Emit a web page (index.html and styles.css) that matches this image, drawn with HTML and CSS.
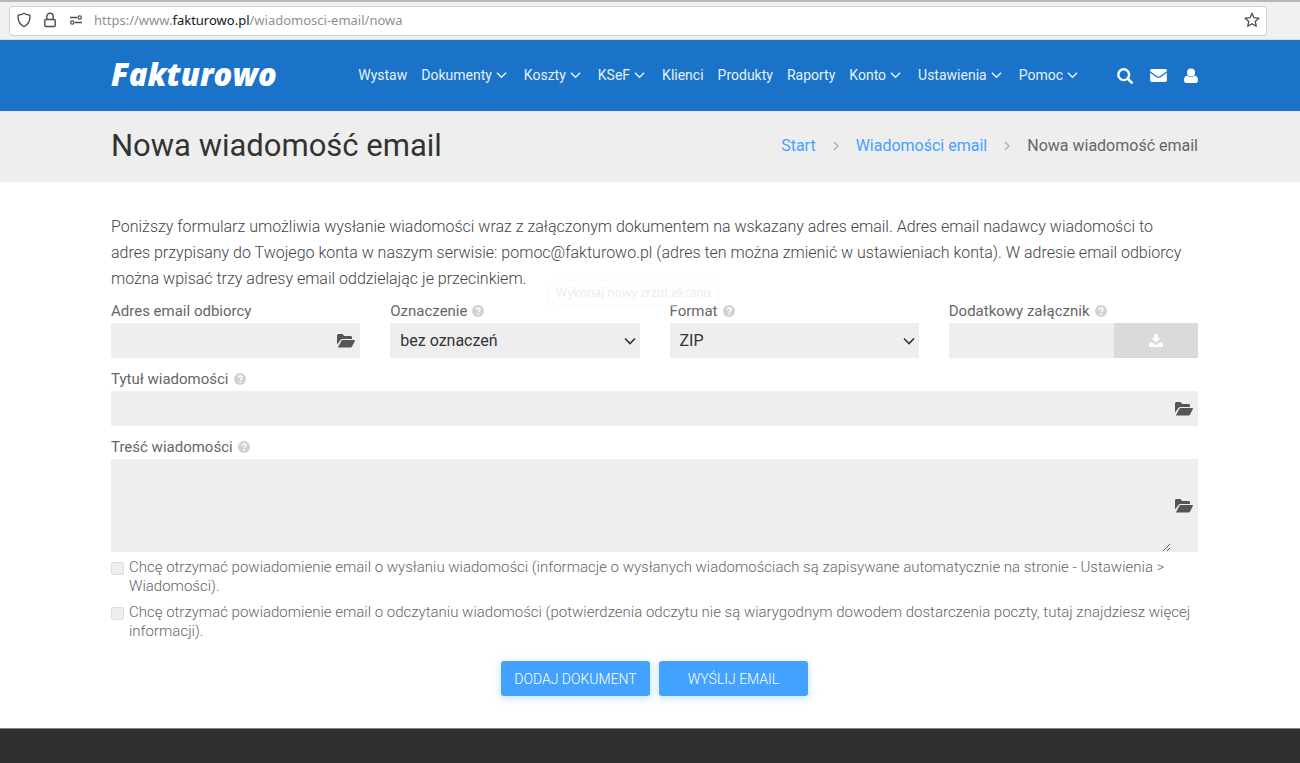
FILE: index.html
```html
<!DOCTYPE html>
<html lang="pl">
<head>
    <meta charset="UTF-8">
    <meta name="viewport" content="width=device-width, initial-scale=1.0">
    <title>Nowa wiadomość email - Fakturowo</title>
    <link rel="stylesheet" href="styles.css">
</head>
<body>
    <svg class="symbols" aria-hidden="true">
        <symbol id="chevron" viewBox="0 0 12 8"><path d="M1 1.5l5 5 5-5" fill="none" stroke="currentColor" stroke-width="1.6"/></symbol>
        <symbol id="next" viewBox="0 0 6 10"><path d="M1 1l4 4-4 4" fill="none" stroke="currentColor" stroke-width="1.2"/></symbol>
        <symbol id="folder" viewBox="0 0 18 14"><path d="M0 10.5V1.6C0 .7.7 0 1.600 0h3.900l1.800 2h6.200c.8 0 1.500.6 1.500 1.500V5H5.600c-1 0-1.800.4-2.300 1.200zM1 13.200l3.300-6.300c.3-.6.800-.9 1.400-.9h11.500c.6 0 1 .6.7 1.100l-3 5.700c-.3.500-.8.800-1.400.8H1.500c-.4 0-.6-.1-.5-.4z" fill="currentColor"/></symbol>
        <symbol id="help" viewBox="0 0 12 12"><circle cx="6" cy="6" r="6" fill="#d2d2d2"/><path d="M4.100 4.700c.1-1.100.9-1.700 2-1.700 1.100 0 1.900.6 1.900 1.600 0 1.300-1.700 1.300-1.700 2.600" fill="none" stroke="#fff" stroke-width="1.400"/><circle cx="6.200" cy="9" r=".9" fill="#fff"/></symbol>
    </svg>

    <div class="browser-bar">
        <div class="address">
            <svg width="16" height="16" viewBox="0 0 16 16"><path d="M8 1.200c1.800 1.200 3.800 1.800 6 2 .3 5-1.600 9.200-6 11.600C3.600 12.400 1.700 8.200 2 3.200c2.200-.2 4.200-.8 6-2z" fill="none" stroke="#4a4a4f" stroke-width="1.300" stroke-linejoin="round"/></svg>
            <svg width="16" height="16" viewBox="0 0 16 16"><path d="M4.800 7.500V4.400a3.200 3.200 0 0 1 6.400 0v3.100M3.800 7.500h8.400a1 1 0 0 1 1 1v5a1 1 0 0 1-1 1H3.800a1 1 0 0 1-1-1v-5a1 1 0 0 1 1-1z" fill="none" stroke="#4a4a4f" stroke-width="1.400"/></svg>
            <svg width="16" height="16" viewBox="0 0 16 16"><path d="M2 5.500h7M7 10.500h7" stroke="#4a4a4f" stroke-width="1.300"/><circle cx="11.700" cy="5.500" r="1.700" fill="none" stroke="#4a4a4f" stroke-width="1.200"/><circle cx="4.300" cy="10.500" r="1.700" fill="none" stroke="#4a4a4f" stroke-width="1.200"/></svg>
            <span class="url">https://www.<b>fakturowo.pl</b>/wiadomosci-email/nowa</span>
            <svg width="16" height="16" viewBox="0 0 16 16"><path d="M8 1.300l2 4.400 4.800.5-3.600 3.200 1.100 4.800L8 11.700l-4.300 2.500 1.100-4.800L1.200 6.200 6 5.700z" fill="none" stroke="#4a4a4f" stroke-width="1.300" stroke-linejoin="round"/></svg>
        </div>
    </div>

    <header class="header">
        <a class="logo" href="#">Fakturowo</a>
        <nav class="menu">
            <a href="#">Wystaw</a>
            <a href="#" class="sub">Dokumenty<svg><use href="#chevron"/></svg></a>
            <a href="#" class="sub">Koszty<svg><use href="#chevron"/></svg></a>
            <a href="#" class="sub">KSeF<svg><use href="#chevron"/></svg></a>
            <a href="#">Klienci</a>
            <a href="#">Produkty</a>
            <a href="#">Raporty</a>
            <a href="#" class="sub">Konto<svg><use href="#chevron"/></svg></a>
            <a href="#" class="sub">Ustawienia<svg><use href="#chevron"/></svg></a>
            <a href="#" class="sub">Pomoc<svg><use href="#chevron"/></svg></a>
        </nav>
        <div class="tools">
            <a href="#" aria-label="Szukaj"><svg width="16" height="16" viewBox="0 0 16 16"><circle cx="6.700" cy="6.700" r="5.400" fill="none" stroke="#fff" stroke-width="2.400"/><path d="M10.700 10.700l4 4" stroke="#fff" stroke-width="2.600" stroke-linecap="round"/></svg></a>
            <a href="#" aria-label="Wiadomości"><svg width="17" height="13" viewBox="0 0 18 14"><path d="M0 1.600C0 .7.7 0 1.600 0h14.800c.9 0 1.600.7 1.600 1.600v.7l-7.300 5.200c-1.100.8-2.300.8-3.400 0L0 2.300zM0 4.100l6.700 4.700c1.500 1 3.100 1 4.600 0L18 4.100v8.300c0 .9-.7 1.600-1.600 1.600H1.600C.7 14 0 13.300 0 12.400z" fill="#fff"/></svg></a>
            <a href="#" aria-label="Konto"><svg width="14" height="16" viewBox="0 0 14 16"><circle cx="7" cy="4.500" r="4" fill="#fff"/><path d="M3.400 7.500c2.200 2 5 2 7.200 0 2.400.3 3.400 2.300 3.400 5 0 1.500-.9 2.500-2.300 2.500H2.300C.9 15 0 14 0 12.500c0-2.700 1-4.700 3.400-5z" fill="#fff"/></svg></a>
        </div>
    </header>

    <div class="title-bar">
        <h1>Nowa wiadomość email</h1>
        <nav class="breadcrumbs">
            <a href="#">Start</a>
            <svg><use href="#next"/></svg>
            <a href="#">Wiadomości email</a>
            <svg><use href="#next"/></svg>
            <span>Nowa wiadomość email</span>
        </nav>
    </div>

    <main class="content">
        <p class="intro">Poniższy formularz umożliwia wysłanie wiadomości wraz z załączonym dokumentem na wskazany adres email. Adres email nadawcy wiadomości to adres przypisany do Twojego konta w naszym serwisie: pomoc@fakturowo.pl (adres ten można zmienić w ustawieniach konta). W adresie email odbiorcy można wpisać trzy adresy email oddzielając je przecinkiem.</p>
        <div class="tooltip">Wykonaj nowy zrzut ekranu</div>

        <form>
            <div class="row">
                <div class="field">
                    <label for="recipient">Adres email odbiorcy</label>
                    <div class="box">
                        <input type="text" id="recipient">
                        <button type="button" class="pick" aria-label="Wybierz adres"><svg><use href="#folder"/></svg></button>
                    </div>
                </div>
                <div class="field">
                    <label for="mark">Oznaczenie <svg><use href="#help"/></svg></label>
                    <div class="box">
                        <select id="mark"><option>bez oznaczeń</option></select>
                        <svg class="arrow"><use href="#chevron"/></svg>
                    </div>
                </div>
                <div class="field">
                    <label for="format">Format <svg><use href="#help"/></svg></label>
                    <div class="box">
                        <select id="format"><option>ZIP</option></select>
                        <svg class="arrow"><use href="#chevron"/></svg>
                    </div>
                </div>
                <div class="field">
                    <label for="attachment">Dodatkowy załącznik <svg><use href="#help"/></svg></label>
                    <div class="box">
                        <input type="text" id="attachment">
                        <button type="button" class="upload" aria-label="Dodaj załącznik"><svg width="14" height="14" viewBox="0 0 14 14"><path d="M5.300 0h3.400v4h2.800L7 8.600 2.500 4h2.800zM1 8.500h2.500L5.300 10.300c1 1 2.400 1 3.400 0l1.800-1.800H13c.6 0 1 .4 1 1V12c0 .6-.4 1-1 1H1c-.6 0-1-.4-1-1V9.500c0-.6.4-1 1-1z" fill="#fff"/></svg></button>
                    </div>
                </div>
            </div>

            <div class="field">
                <label for="subject">Tytuł wiadomości <svg><use href="#help"/></svg></label>
                <div class="box">
                    <input type="text" id="subject">
                    <button type="button" class="pick" aria-label="Wybierz tytuł"><svg><use href="#folder"/></svg></button>
                </div>
            </div>

            <div class="field">
                <label for="message">Treść wiadomości <svg><use href="#help"/></svg></label>
                <div class="box">
                    <textarea id="message"></textarea>
                    <button type="button" class="pick" aria-label="Wybierz treść"><svg><use href="#folder"/></svg></button>
                </div>
            </div>

            <div class="checks">
                <div class="check">
                    <input type="checkbox" id="sent">
                    <label for="sent">Chcę otrzymać powiadomienie email o wysłaniu wiadomości (informacje o wysłanych wiadomościach są zapisywane automatycznie na stronie - Ustawienia &gt; Wiadomości).</label>
                </div>
                <div class="check">
                    <input type="checkbox" id="read">
                    <label for="read">Chcę otrzymać powiadomienie email o odczytaniu wiadomości (potwierdzenia odczytu nie są wiarygodnym dowodem dostarczenia poczty, tutaj znajdziesz więcej informacji).</label>
                </div>
            </div>

            <div class="actions">
                <button type="button">DODAJ DOKUMENT</button>
                <button type="submit">WYŚLIJ EMAIL</button>
            </div>
        </form>
    </main>

    <footer class="footer"></footer>
</body>
</html>
```
FILE: styles.css
```css
* {
    box-sizing: border-box;
}

body {
    display: flex;
    flex-direction: column;
    min-height: 100vh;
    margin: 0;
    font-family: Roboto, sans-serif;
    font-size: 16px;
    color: #666;
    background-color: #fff;
}

a {
    text-decoration: none;
}

svg {
    display: block;
    flex: none;
}

.symbols {
    display: none;
}

/* browser address bar */
.browser-bar {
    height: 40px;
    padding: 4px 33px 4px 9px;
    background-color: #f0f0f2;
    border-top: 2px solid #b4b8b7;
    border-bottom: 1px solid #dcdce0;
}

.address {
    display: flex;
    align-items: center;
    gap: 10px;
    height: 30px;
    padding: 0 6px 2px;
    background-color: #fff;
    border: 1px solid #cfcfd3;
    border-radius: 4px;
}

.url {
    flex: 1;
    font-family: "Noto Sans", sans-serif;
    font-size: 13px;
    color: #8f8f94;
}

.url b {
    font-weight: 400;
    color: #15141a;
}

/* header */
.header,
.title-bar,
.content {
    padding-left: 111px;
    padding-right: 102px;
}

.header {
    display: flex;
    align-items: center;
    height: 71px;
    background-color: #1a73c8;
}

.logo {
    margin-right: auto;
    padding-bottom: 4px;
    font-family: "Open Sans", sans-serif;
    font-size: 31px;
    font-style: italic;
    font-weight: 800;
    line-height: 36px;
    color: #fff;
}

.menu {
    display: flex;
    gap: 14px;
    margin-right: 36px;
    padding-bottom: 2px;
}

.menu a {
    display: flex;
    align-items: center;
    font-size: 14px;
    color: #e6f0fa;
}

.menu svg {
    width: 11px;
    height: 8px;
    margin: 0 3px 0 4px;
}

.tools {
    display: flex;
    align-items: center;
    gap: 17px;
}

/* page title */
.title-bar {
    display: flex;
    align-items: center;
    justify-content: space-between;
    height: 71px;
    padding-bottom: 2px;
    background-color: #eee;
}

h1 {
    margin: 0;
    font-size: 31px;
    font-weight: 400;
    color: #333;
}

.breadcrumbs {
    display: flex;
    align-items: center;
    gap: 17px;
    font-size: 16px;
}

.breadcrumbs a {
    color: #43a2ff;
}

.breadcrumbs svg {
    width: 6px;
    height: 10px;
    color: #aaa;
}

/* form */
.content {
    position: relative;
    padding-top: 32px;
    padding-bottom: 32px;
}

.intro {
    margin: 0 0 7px;
    padding-right: 4px;
    font-size: 16px;
    font-weight: 300;
    line-height: 26px;
    color: #444;
}

.tooltip {
    position: absolute;
    top: 99px;
    left: 549px;
    padding: 0 7px;
    font-family: "Noto Sans", sans-serif;
    font-size: 12px;
    line-height: 24px;
    color: #ececec;
    border-radius: 3px;
    box-shadow: 0 0 4px #f6f6f6;
}

.row {
    display: grid;
    grid-template-columns: repeat(4, minmax(0, 1fr));
    gap: 30px;
}

.row,
.field {
    margin-bottom: 9px;
}

.row .field {
    margin-bottom: 0;
}

.field label {
    display: flex;
    align-items: center;
    gap: 5px;
    font-size: 15px;
    line-height: 24px;
}

.field label svg {
    width: 12px;
    height: 12px;
}

.box {
    display: flex;
    align-items: center;
    position: relative;
    background-color: #eee;
}

.box input,
.box select,
.box textarea {
    flex: 1;
    min-width: 0;
    height: 35px;
    margin: 0;
    padding: 0 10px;
    font-family: inherit;
    font-size: 16px;
    color: #333;
    background: transparent;
    border: 0;
    outline: 0;
    appearance: none;
}

.box textarea {
    height: 93px;
    resize: vertical;
}

.arrow {
    position: absolute;
    right: 4px;
    width: 12px;
    height: 8px;
    color: #333;
    pointer-events: none;
}

.pick {
    width: 27px;
    padding: 0 5px 0 4px;
    color: #555;
    background: transparent;
    border: 0;
    cursor: pointer;
}

.pick svg {
    width: 18px;
    height: 14px;
}

.upload {
    display: flex;
    align-items: center;
    justify-content: center;
    width: 84px;
    height: 35px;
    background-color: #dadada;
    border: 0;
    cursor: pointer;
}

.checks {
    display: grid;
    gap: 7px;
    margin: -3px 0 20px;
}

.check {
    display: flex;
    align-items: flex-start;
    gap: 5px;
    font-size: 15px;
    font-weight: 300;
    line-height: 19px;
}

.check input {
    flex: none;
    width: 13px;
    height: 13px;
    margin: 4px 0 0;
    background-color: #eee;
    border: 1px solid #ddd;
    border-radius: 2px;
    appearance: none;
}

.check input:checked {
    background-color: #43a2ff;
}

.actions {
    display: flex;
    justify-content: center;
    gap: 9px;
}

.actions button {
    width: 149px;
    height: 35px;
    padding: 0;
    font-family: inherit;
    font-size: 14px;
    font-weight: 300;
    color: #fff;
    background-color: #43a2ff;
    border: 0;
    border-radius: 3px;
    box-shadow: 0 2px 8px rgba(67, 162, 255, 0.35);
    cursor: pointer;
}

.footer {
    flex: 1;
    background-color: #303030;
    border-top: 1px solid #888;
}
```
